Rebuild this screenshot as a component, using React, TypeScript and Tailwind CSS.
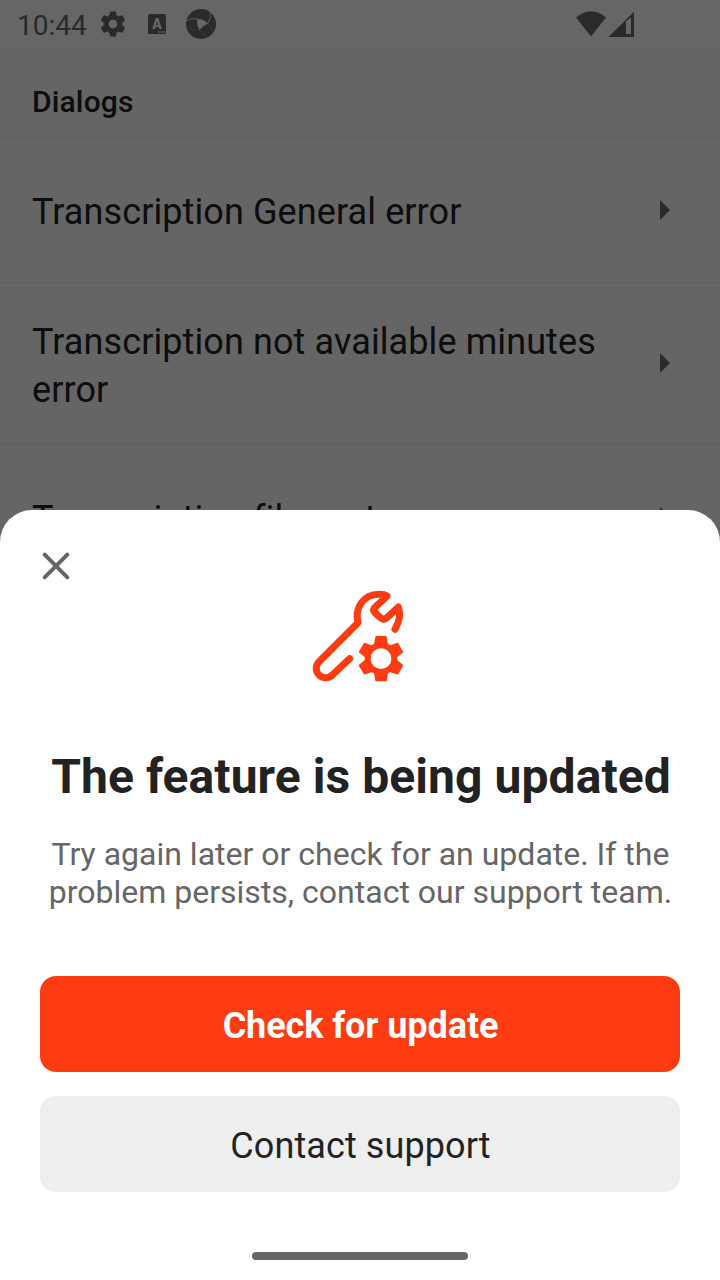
import React from "react";

const GEAR_PATH =
  "M19.43 12.98c.04-.32.07-.64.07-.98s-.03-.66-.07-.98l2.11-1.65c.19-.15.24-.42.12-.64l-2-3.46c-.12-.22-.39-.3-.61-.22l-2.49 1c-.52-.4-1.08-.73-1.69-.98l-.38-2.65C14.46 2.18 14.25 2 14 2h-4c-.25 0-.46.18-.49.42l-.38 2.65c-.61.25-1.17.59-1.69.98l-2.49-1c-.23-.09-.49 0-.61.22l-2 3.46c-.13.22-.07.49.12.64l2.11 1.65c-.04.32-.07.65-.07.98s.03.66.07.98l-2.11 1.65c-.19.15-.24.42-.12.64l2 3.46c.12.22.39.3.61.22l2.49-1c.52.4 1.08.73 1.69.98l.38 2.65c.03.24.24.42.49.42h4c.25 0 .46-.18.49-.42l.38-2.65c.61-.25 1.17-.59 1.69-.98l2.49 1c.23.09.49 0 .61-.22l2-3.46c.12-.22.07-.49-.12-.64l-2.11-1.65zM12 15.5c-1.93 0-3.5-1.57-3.5-3.5s1.57-3.5 3.5-3.5 3.5 1.57 3.5 3.5-1.57 3.5-3.5 3.5z";

function ApertureIcon() {
  return (
    <svg className="ml-[19px] h-8 w-8" viewBox="0 0 32 32">
      <circle cx="16" cy="16" r="15" fill="#6a6a6a" />
      <path d="M12.300 11Q18 10.500 22.800 15.500Q18 17.500 14.300 22Q11.500 17 12.300 11Z" fill="#fff" />
      <g fill="none" stroke="#fff" strokeWidth="0.8" strokeLinecap="round">
        <path d="M1.500 13Q6 9.500 12.500 11" />
        <path d="M25.500 3.500Q26.500 10 22.800 15.500" />
        <path d="M14.300 22Q8.500 23.500 4 20.500" opacity="0.3" />
        <path d="M22.800 15.500Q27 18.500 27.500 24" opacity="0.3" />
        <path d="M14.300 22Q17.500 27 22.500 28.500" opacity="0.3" />
      </g>
    </svg>
  );
}

function StatusBar() {
  return (
    <div className="flex h-12 shrink-0 items-center bg-white pl-4 text-[#6a6a6a]">
      <span className="mt-[3px] w-[82px] whitespace-nowrap pl-px text-[28px] leading-none">10:44</span>
      <svg className="h-[30px] w-[30px]" viewBox="0 0 24 24" fill="currentColor">
        <path d={GEAR_PATH} />
      </svg>
      <svg className="ml-5 h-5 w-[18px]" viewBox="0 0 18 20">
        <rect width="18" height="20" rx="1.500" fill="#6a6a6a" />
        <text x="9" y="15" textAnchor="middle" fontSize="14" fontWeight="900" fill="#fff">A</text>
        <path d="M10 17.200h1.600v1.500H10zM12.700 17.200h1.600v1.500h-1.600zM15.400 17.200H17v1.500h-1.600z" fill="#fff" />
      </svg>
      <ApertureIcon />
      <svg className="ml-auto mr-[85px] h-12 w-[60px]" viewBox="0 0 60 48" fill="currentColor">
        <path d="M1 17.500Q16 5 31 17.500L16 36.500Z" />
        <path fillRule="evenodd" d="M33.500 37L59 11.800V37ZM51 21.500V34H56V17.500Z" />
      </svg>
    </div>
  );
}

function ListItem({ label, className }: { label: string; className: string }) {
  return (
    <div className={`flex shrink-0 items-center justify-between border-b border-[#eeeeee] pl-8 pr-[50px] ${className}`}>
      <span className="w-[590px] text-[36px] leading-[48px] tracking-[0.1px] text-[#222]">{label}</span>
      <svg className="h-5 w-[10px]" viewBox="0 0 10 20" fill="#6a6a6a">
        <path d="M0 0L10 10L0 20Z" />
      </svg>
    </div>
  );
}

function RepairIcon() {
  return (
    <svg className="h-[110px] w-[120px]" viewBox="0 0 360 330">
      <path
        d="M149 236L97 285A28 28 0 0 1 57 245L174 128C163 84 190 43 237 43Q253 43 261 48L225 82Q217 90 225 98L240 112Q251 123 262 112L295 81Q306 112 285 148"
        fill="none"
        stroke="#ff3b12"
        strokeWidth="21"
        strokeLinecap="round"
        strokeLinejoin="round"
      />
      <circle cx="243" cy="236" r="40" fill="none" stroke="#ff3b12" strokeWidth="18" />
      <g fill="#ff3b12">
        {[0, 60, 120, 180, 240, 300].map((angle) => (
          <path key={angle} transform={`rotate(${angle} 243 236)`} d="M228 168H258L260 170L264 193L258 200H228L222 193L226 170Z" />
        ))}
      </g>
    </svg>
  );
}

function UpdateSheet() {
  return (
    <section className="flex h-[770px] w-full flex-col items-center rounded-t-[32px] bg-white px-10">
      <div className="flex h-[70px] w-full shrink-0 items-end">
        <button aria-label="Close" className="-mb-[2px] h-8 w-8">
          <svg className="h-8 w-8" viewBox="0 0 32 32" stroke="#666" strokeWidth="4" strokeLinecap="round">
            <path d="M4.700 4.700L27.300 27.300M27.300 4.700L4.700 27.300" />
          </svg>
        </button>
      </div>
      <RepairIcon />
      <h1 className="mt-[59px] whitespace-nowrap pl-[2px] text-[48px] font-bold leading-[56px] tracking-[0.07px] text-[#222]">
        The feature is being updated
      </h1>
      <p className="mt-[30px] whitespace-nowrap pl-px text-center text-[32px] leading-[38px] text-[#666]">
        Try again later or check for an update. If the
        <br />
        problem persists, contact our support team.
      </p>
      <button className="mt-[65px] h-24 w-full shrink-0 rounded-2xl bg-[#ff3b12] pl-px pt-[3px] text-[36px] font-bold tracking-[-0.08px] text-white">
        Check for update
      </button>
      <button className="mt-6 h-24 w-full shrink-0 rounded-2xl bg-[#eeeeee] pl-px pt-[3px] text-[36px] tracking-[0.1px] text-[#222]">
        Contact support
      </button>
      <div className="mb-5 mt-auto h-2 w-[216px] shrink-0 rounded-full bg-[#666]" />
    </section>
  );
}

export default function App() {
  return (
    <div className="relative h-[1280px] w-[720px] overflow-hidden font-['Roboto',sans-serif]">
      <main className="flex h-full flex-col bg-[#fcfcfc]">
        <StatusBar />
        <header className="flex h-[90px] shrink-0 items-center border-b border-[#eeeeee] pl-8 pt-[18px]">
          <h2 className="text-[30px] font-medium leading-none tracking-[0.15px] text-[#222]">Dialogs</h2>
        </header>
        <ListItem className="h-[145px] [&>span]:mt-[3px]" label="Transcription General error" />
        <ListItem className="h-[162px] [&>span]:mt-[5px] [&>svg]:-mt-[2px]" label="Transcription not available minutes error" />
        <ListItem className="h-[145px] [&>span]:mt-[3px]" label="Transcription file part error" />
      </main>
      <div className="absolute inset-0 flex items-end bg-black/60">
        <UpdateSheet />
      </div>
    </div>
  );
}
